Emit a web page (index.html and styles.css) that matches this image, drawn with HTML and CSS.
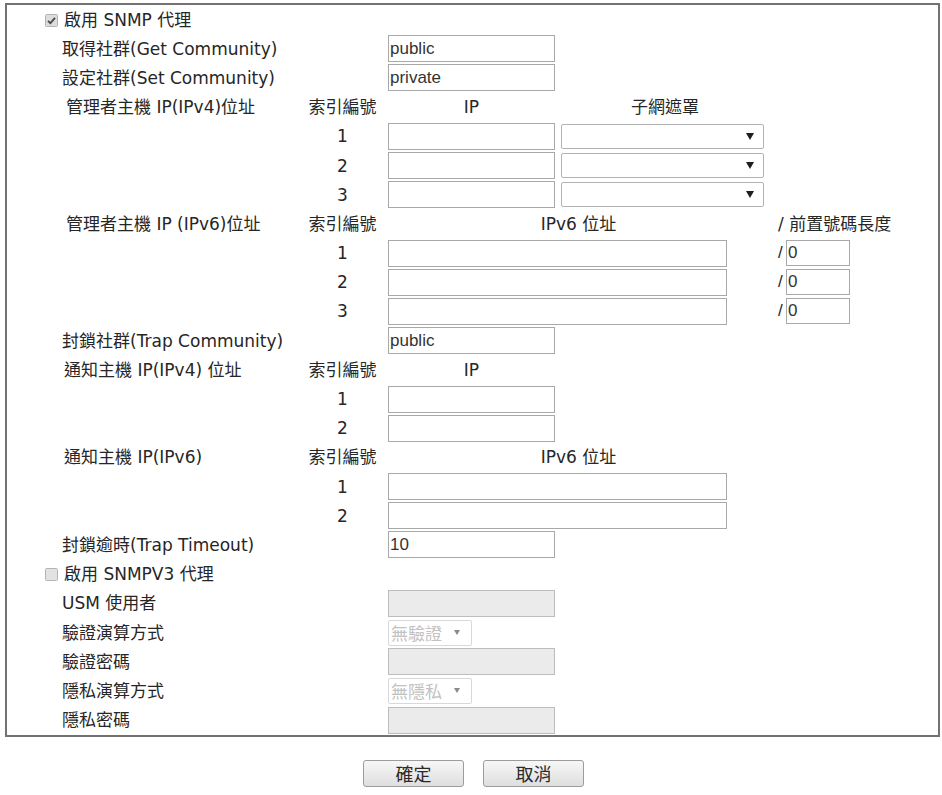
FILE: index.html
```html
<!DOCTYPE html>
<html lang="zh-Hant">
<head>
<meta charset="utf-8">
<title>SNMP</title>
<link rel="stylesheet" href="styles.css">
</head>
<body>
<div class="frame">
  <table class="form">
    <colgroup>
      <col class="c-label"><col class="c-idx"><col class="c-ip"><col class="c-mask"><col class="c-pre">
    </colgroup>
    <tr>
      <td colspan="5" class="check-row">
        <span class="cb"><svg width="13" height="13" viewBox="0 0 13 13"><rect x="0.5" y="0.5" width="12" height="12" rx="1" fill="#dcdcdc" stroke="#b4b4b4"/><path d="M3 6.8 L5.4 9.2 L10 3.8" fill="none" stroke="#4a4a4a" stroke-width="1.8"/></svg></span>啟用 SNMP 代理
      </td>
    </tr>
    <tr>
      <td class="label">取得社群(Get Community)</td><td></td>
      <td><input class="txt" type="text" value="public"></td><td></td><td></td>
    </tr>
    <tr>
      <td class="label">設定社群(Set Community)</td><td></td>
      <td><input class="txt" type="text" value="private"></td><td></td><td></td>
    </tr>
    <tr>
      <td class="label indent">管理者主機 IP(IPv4)位址</td><td class="idx">索引編號</td>
      <td class="head">IP</td><td class="head">子網遮罩</td><td></td>
    </tr>
    <tr>
      <td></td><td class="idx">1</td>
      <td><input class="txt" type="text"></td>
      <td><span class="sel"><select><option></option></select></span></td><td></td>
    </tr>
    <tr>
      <td></td><td class="idx">2</td>
      <td><input class="txt" type="text"></td>
      <td><span class="sel"><select><option></option></select></span></td><td></td>
    </tr>
    <tr>
      <td></td><td class="idx">3</td>
      <td><input class="txt" type="text"></td>
      <td><span class="sel"><select><option></option></select></span></td><td></td>
    </tr>
    <tr>
      <td class="label indent">管理者主機 IP (IPv6)位址</td><td class="idx">索引編號</td>
      <td colspan="2" class="head">IPv6 位址</td><td class="pre-head">/ 前置號碼長度</td>
    </tr>
    <tr>
      <td></td><td class="idx">1</td>
      <td colspan="2"><input class="txt wide" type="text"></td>
      <td class="pre"><span class="slash">/</span><input class="txt short" type="text" value="0"></td>
    </tr>
    <tr>
      <td></td><td class="idx">2</td>
      <td colspan="2"><input class="txt wide" type="text"></td>
      <td class="pre"><span class="slash">/</span><input class="txt short" type="text" value="0"></td>
    </tr>
    <tr>
      <td></td><td class="idx">3</td>
      <td colspan="2"><input class="txt wide" type="text"></td>
      <td class="pre"><span class="slash">/</span><input class="txt short" type="text" value="0"></td>
    </tr>
    <tr>
      <td class="label">封鎖社群(Trap Community)</td><td></td>
      <td><input class="txt" type="text" value="public"></td><td></td><td></td>
    </tr>
    <tr>
      <td class="label indent-s">通知主機 IP(IPv4) 位址</td><td class="idx">索引編號</td>
      <td class="head">IP</td><td></td><td></td>
    </tr>
    <tr>
      <td></td><td class="idx">1</td>
      <td><input class="txt" type="text"></td><td></td><td></td>
    </tr>
    <tr>
      <td></td><td class="idx">2</td>
      <td><input class="txt" type="text"></td><td></td><td></td>
    </tr>
    <tr>
      <td class="label indent-s">通知主機 IP(IPv6)</td><td class="idx">索引編號</td>
      <td colspan="2" class="head">IPv6 位址</td><td></td>
    </tr>
    <tr>
      <td></td><td class="idx">1</td>
      <td colspan="2"><input class="txt wide" type="text"></td><td></td>
    </tr>
    <tr>
      <td></td><td class="idx">2</td>
      <td colspan="2"><input class="txt wide" type="text"></td><td></td>
    </tr>
    <tr>
      <td class="label">封鎖逾時(Trap Timeout)</td><td></td>
      <td><input class="txt" type="text" value="10"></td><td></td><td></td>
    </tr>
    <tr>
      <td colspan="5" class="check-row">
        <span class="cb"><svg width="13" height="13" viewBox="0 0 13 13"><rect x="0.5" y="0.5" width="12" height="12" rx="1" fill="#e2e2e2" stroke="#b4b4b4"/></svg></span>啟用 SNMPV3 代理
      </td>
    </tr>
    <tr>
      <td class="label">USM 使用者</td><td></td>
      <td><input class="txt" type="text" disabled></td><td></td><td></td>
    </tr>
    <tr>
      <td class="label">驗證演算方式</td><td></td>
      <td><span class="sel small"><select disabled><option>無驗證</option></select></span></td><td></td><td></td>
    </tr>
    <tr>
      <td class="label">驗證密碼</td><td></td>
      <td><input class="txt" type="password" disabled></td><td></td><td></td>
    </tr>
    <tr>
      <td class="label">隱私演算方式</td><td></td>
      <td><span class="sel small"><select disabled><option>無隱私</option></select></span></td><td></td><td></td>
    </tr>
    <tr>
      <td class="label">隱私密碼</td><td></td>
      <td><input class="txt" type="password" disabled></td><td></td><td></td>
    </tr>
  </table>
</div>
<div class="actions">
  <button class="btn" type="button">確定</button>
  <button class="btn" type="button">取消</button>
</div>
</body>
</html>
```
FILE: styles.css
```css
html, body {
  margin: 0;
  padding: 0;
  background: #ffffff;
}
body {
  font-family: "DejaVu Sans", "Noto Sans CJK TC", sans-serif;
  font-size: 17px;
  color: #262626;
}
.frame {
  margin: 3px 2px 0 5px;
  border: 2px solid #727272;
}
.form {
  width: 100%;
  table-layout: fixed;
  border-collapse: collapse;
  border-spacing: 0;
}
.c-label { width: 293px; }
.c-idx { width: 85px; }
.c-ip { width: 173px; }
.c-mask { width: 214px; }
.form td {
  padding: 0;
  height: 29.2px;
  vertical-align: middle;
  white-space: nowrap;
  line-height: 20px;
}
.check-row {
  padding-left: 38px !important;
}
.cb {
  display: inline-block;
  width: 13px;
  height: 13px;
  margin-right: 6px;
  vertical-align: -1px;
}
.cb svg { display: block; }
.label { padding-left: 55px !important; }
.label.indent { padding-left: 59px !important; }
.label.indent-s { padding-left: 57px !important; }
.idx { text-align: center; }
.head { text-align: center; }
.pre-head { padding-left: 6px !important; }
.pre {
  padding-left: 6px !important;
}
.pre .slash,
.pre .txt {
  display: inline-block;
  vertical-align: middle;
}
.slash {
  font-family: "Liberation Sans", sans-serif;
  width: 8px;
}
.txt {
  display: block;
  box-sizing: border-box;
  width: 167px;
  height: 27px;
  margin: 0 0 0 3px;
  padding: 0 1px;
  border: 1px solid #a9a9a9;
  border-radius: 0;
  background: #ffffff;
  font-family: "Liberation Sans", sans-serif;
  font-size: 17px;
  color: #333333;
  outline: none;
}
.txt.wide { width: 339px; }
.pre .txt.short {
  width: 64px;
  height: 26px;
  margin-left: 0;
}
.txt:disabled {
  background: #ebebeb;
  border-color: #bdbdbd;
}
.sel {
  display: block;
  position: relative;
  width: 203px;
  height: 25px;
  margin-left: 3px;
}
.sel select {
  display: block;
  width: 100%;
  height: 100%;
  box-sizing: border-box;
  appearance: none;
  -webkit-appearance: none;
  border: 1px solid #b3b3b3;
  border-radius: 2px;
  background: #ffffff;
  padding: 0 2px;
  font-family: "Noto Sans CJK TC", "DejaVu Sans", sans-serif;
  font-size: 17px;
  color: #333;
  outline: none;
}
.sel::after {
  content: "";
  position: absolute;
  right: 10px;
  top: 9px;
  border-left: 4px solid transparent;
  border-right: 4px solid transparent;
  border-top: 7px solid #1e1e1e;
  pointer-events: none;
}
.sel.small {
  width: 84px;
  height: 26px;
}
.sel.small select:disabled {
  color: #a8a8a8;
  background: #ffffff;
  border-color: #c8c8c8;
  line-height: 22px;
}
.sel.small::after {
  right: 12px;
  top: 10px;
  border-left-width: 3px;
  border-right-width: 3px;
  border-top: 5px solid #8a8a8a;
}
.actions {
  display: flex;
  justify-content: center;
  gap: 19px;
  margin-top: 23px;
  padding-left: 5px;
}
.btn {
  width: 101px;
  height: 27px;
  box-sizing: border-box;
  border: 1px solid #9c9c9c;
  border-radius: 3px;
  background: linear-gradient(#f7f7f7, #dedede);
  font-family: "Noto Sans CJK TC", sans-serif;
  font-size: 18px;
  line-height: 22px;
  color: #2a2a2a;
  padding: 0;
}
```
